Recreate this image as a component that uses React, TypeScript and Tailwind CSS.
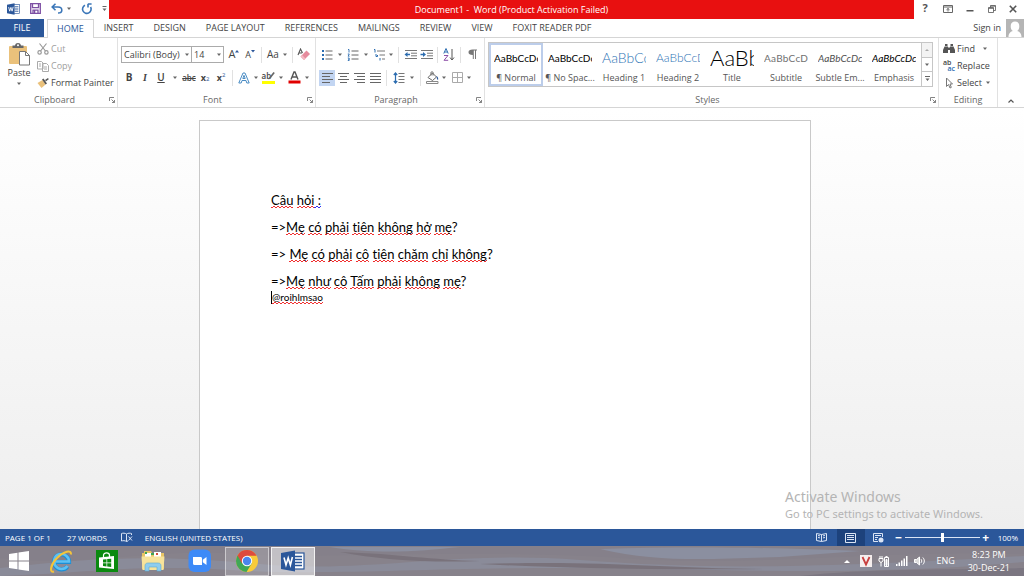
import { useState } from "react";
import type { ReactNode } from "react";

const TABS = ["HOME", "INSERT", "DESIGN", "PAGE LAYOUT", "REFERENCES", "MAILINGS", "REVIEW", "VIEW", "FOXIT READER PDF"];

const STYLES = [
  { name: "¶ Normal", sample: "AaBbCcDc", look: "text-[10px] text-black" },
  { name: "¶ No Spac...", sample: "AaBbCcDc", look: "text-[10px] text-black" },
  { name: "Heading 1", sample: "AaBbCc", look: "text-[14px] text-[#2e74b5] font-light" },
  { name: "Heading 2", sample: "AaBbCcD", look: "text-[12px] text-[#2e74b5] font-light" },
  { name: "Title", sample: "AaBb", look: "text-[22px] text-black font-light" },
  { name: "Subtitle", sample: "AaBbCcD", look: "text-[10px] text-[#707070] tracking-wide" },
  { name: "Subtle Em...", sample: "AaBbCcDc", look: "text-[10px] text-[#505050] italic" },
  { name: "Emphasis", sample: "AaBbCcDc", look: "text-[10px] text-black italic" },
];

function Caret() {
  return (
    <svg viewBox="0 0 8 4" className="w-2 h-1 shrink-0" fill="#666">
      <path d="M2 0.5h4L4 3z" />
    </svg>
  );
}

function Sep() {
  return <span className="w-px h-4 bg-[#e1e1e1] shrink-0 mx-[3px]" />;
}

function Tool({ label, className = "w-4", children }: { label: string; className?: string; children: ReactNode }) {
  return (
    <button aria-label={label} className={`${className} h-4 shrink-0 flex items-center justify-center`}>
      {children}
    </button>
  );
}

function Launcher() {
  return (
    <svg viewBox="0 0 6 6" className="w-[6px] h-[6px]" fill="none" stroke="#777" strokeWidth="0.9">
      <path d="M0.5 4V0.5H5M2.5 2.5L5.5 5.5M5.5 3v2.5H3" />
    </svg>
  );
}

function Group({ name, className, launcher = true, children }: { name: string; className: string; launcher?: boolean; children: ReactNode }) {
  return (
    <section className={`${className} flex flex-col border-r border-[#e1e1e1]`}>
      <div className="h-[55px]">{children}</div>
      <div className="h-[14px] flex items-center">
        <span className="flex-1 text-center text-[#666]">{name}</span>
        {launcher && <span className="w-2"><Launcher /></span>}
      </div>
    </section>
  );
}

function WordMark({ className }: { className: string }) {
  return (
    <svg viewBox="0 0 24 22" className={className}>
      <rect x="12" y="3" width="11" height="16" fill="#fff" stroke="#2b579a" strokeWidth="1.2" />
      <path d="M14 6.5h7M14 9.5h7M14 12.5h7M14 15.5h7" stroke="#2b579a" strokeWidth="1.3" />
      <path d="M0 3L14 0.5v21L0 19z" fill="#2b579a" />
      <path d="M3 7.5l2 7.5 2.2-7 2.2 7 2-8" fill="none" stroke="#fff" strokeWidth="1.6" />
    </svg>
  );
}

function TitleBar() {
  return (
    <header className="h-[19px] flex items-stretch bg-white">
      <div className="w-[109px] flex items-center pl-[7px] pb-[2px]">
        <WordMark className="w-[13px] h-3" />
        <button aria-label="Save" className="ml-[10px]">
          <svg viewBox="0 0 11 11" className="w-[11px] h-[11px]" fill="none" stroke="#7d4fa3" strokeWidth="1.3">
            <path d="M0.7 0.7h9.6v9.6H0.7zM2.5 0.7v4h6v-4M3 10.3V7.2h5v3.1M4.6 7.5v2.5" />
          </svg>
        </button>
        <button aria-label="Undo" className="ml-[10px]">
          <svg viewBox="0 0 12 11" className="w-3 h-[11px]" fill="none" stroke="#3a76b8" strokeWidth="1.6">
            <path d="M4.5 0.8L1.2 4l3.3 3.2M1.5 4H7c2.5 0 3.8 1.3 3.8 3.2S9 10 7 10" />
          </svg>
        </button>
        <span className="ml-[2px] flex"><Caret /></span>
        <button aria-label="Repeat" className="ml-2">
          <svg viewBox="0 0 12 12" className="w-3 h-3" fill="none" stroke="#3a76b8" strokeWidth="1.6">
            <path d="M4 2.2A4.3 4.3 0 1 0 9.6 4M6.8 1h3.8M7 1v3.6" />
          </svg>
        </button>
        <button aria-label="Customize quick access" className="ml-[9px]">
          <svg viewBox="0 0 5 6" className="w-[5px] h-[6px]" fill="#666">
            <path d="M0.5 0h4v1h-4zM0.5 2.5h4L2.5 5z" />
          </svg>
        </button>
      </div>
      <h1 className="flex-1 bg-[#e81010] text-white text-[9px] flex items-center justify-center whitespace-pre">
        Document1 -  Word (Product Activation Failed)
      </h1>
      <div className="w-[110px] flex items-center justify-between px-[7px] pb-[2px] text-[#555]">
        <button aria-label="Help" className="text-[11px] font-bold w-2">?</button>
        <button aria-label="Ribbon display options">
          <svg viewBox="0 0 10 8" className="w-[10px] h-2" fill="none" stroke="#666">
            <path d="M0.5 0.5h9v7h-9zM0.5 2h9M5 6.5v-3M3.5 4.8L5 3.5l1.5 1.3" />
          </svg>
        </button>
        <button aria-label="Minimize"><svg viewBox="0 0 8 8" className="w-2 h-2"><path d="M0.5 5h7v1.5h-7z" fill="#555" /></svg></button>
        <button aria-label="Restore">
          <svg viewBox="0 0 8 8" className="w-2 h-2" fill="none" stroke="#555">
            <path d="M0.5 2.5h5v5h-5zM0.5 3.4h5M2.5 2.5v-2h5v5h-2M2.5 1.2h5" strokeWidth="0.8" />
          </svg>
        </button>
        <button aria-label="Close">
          <svg viewBox="0 0 8 8" className="w-2 h-2" stroke="#555" strokeWidth="1.6"><path d="M0.8 0.8l6.4 6.4M7.2 0.8L0.8 7.2" /></svg>
        </button>
      </div>
    </header>
  );
}

function TabRow({ active, onSelect }: { active: string; onSelect: (tab: string) => void }) {
  return (
    <nav className="h-[19px] flex items-stretch bg-white text-[9px] text-[#444] border-b border-[#d5d5d5]">
      <button className="w-11 mr-[3px] bg-[#2b579a] text-white">FILE</button>
      {TABS.map((tab) => (
        <button
          key={tab}
          onClick={() => onSelect(tab)}
          className={`px-[9px] whitespace-nowrap ${tab === active ? "border border-b-0 border-[#d5d5d5] bg-white text-[#2b579a] -mb-px" : "border border-transparent"}`}
        >
          {tab}
        </button>
      ))}
      <div className="ml-auto flex items-center">
        <a href="#signin" className="mr-[5px] whitespace-nowrap">Sign in</a>
        <svg viewBox="0 0 18 18" className="w-[18px] h-[18px]">
          <rect width="18" height="18" fill="#b5b5b5" />
          <path d="M2.5 18c0-4 2.5-5.5 4.3-6C5 11 4.7 8.8 4.7 7c0-3 1.8-4.6 4.3-4.6s4.3 1.6 4.3 4.6c0 1.8-.3 4-2.1 5 1.8.5 4.3 2 4.3 6z" fill="#fff" />
        </svg>
      </div>
    </nav>
  );
}

function ClipboardGroup() {
  return (
    <Group name="Clipboard" className="w-[118px] shrink-0">
      <div className="flex pl-[5px] pt-[2px]">
        <button className="w-[28px] pt-[2px] flex flex-col items-center text-[#444]">
          <svg viewBox="0 0 24 24" className="w-6 h-6">
            <rect x="2" y="4" width="18" height="18" rx="1" fill="#eac17b" />
            <path d="M5.5 6V3.5H8C8.2 1.8 9.5 1 11 1s2.8.8 3 2.500h2.500V6z" fill="#666" />
            <circle cx="11" cy="3.2" r="1" fill="#fff" />
            <path d="M12.5 9.5h6l4 4V23h-10z" fill="#fff" stroke="#777" />
            <path d="M18.5 9.5v4h4" fill="none" stroke="#777" />
          </svg>
          <span className="leading-[14px]">Paste</span>
          <span className="h-2 flex items-center"><Caret /></span>
        </button>
        <div className="flex flex-col pl-1">
          <button className="h-[17px] flex items-center gap-[2px] text-[#a0a0a0]">
            <svg viewBox="0 0 12 12" className="w-3 h-3" fill="none" stroke="#999" strokeWidth="1.2">
              <path d="M2.5 0.5L8.500 8M9.5 0.5L3.500 8" />
              <circle cx="2.6" cy="9.4" r="1.7" />
              <circle cx="9.4" cy="9.4" r="1.7" />
            </svg>
            Cut
          </button>
          <button className="h-[17px] flex items-center gap-[2px] text-[#a0a0a0]">
            <svg viewBox="0 0 12 12" className="w-3 h-3" fill="#fff" stroke="#aaa">
              <path d="M0.5 1.5h4l1.5 1.5v6h-5.5zM5.5 3.5h4l2 2v6h-6zM7 7h3M7 9h3M2 4h2M2 6h2" />
            </svg>
            Copy
          </button>
          <button className="h-[17px] flex items-center gap-[2px] text-[#444] whitespace-nowrap">
            <svg viewBox="0 0 12 12" className="w-3 h-3">
              <path d="M0.5 6l5-3 3 4.5-4 3.5z" fill="#eac17b" />
              <path d="M5 2.5l1.5-1 3.5 5-1.5 1zM8 3l3-2 0.800 1.200L9 4.200z" fill="#555" />
            </svg>
            Format Painter
          </button>
        </div>
      </div>
    </Group>
  );
}

function FontGroup() {
  return (
    <Group name="Font" className="w-[198px] shrink-0">
      <div className="pl-[3px] pt-2 flex flex-col gap-[6px] text-[#444]">
        <div className="flex items-center h-[17px]">
          <label className="w-[71px] h-[17px] border border-[#ababab] flex items-center">
            <select aria-label="Font name" className="appearance-none flex-1 min-w-0 pl-[2px] outline-none">
              <option>Calibri (Body)</option>
              <option>Calibri Light</option>
            </select>
            <Caret />
          </label>
          <label className="w-8 h-[17px] border border-l-0 border-[#ababab] flex items-center">
            <select aria-label="Font size" defaultValue="14" className="appearance-none flex-1 min-w-0 pl-[2px] outline-none">
              <option>11</option>
              <option>14</option>
            </select>
            <Caret />
          </label>
          <Tool label="Grow font" className="w-4 ml-[2px]">
            <span className="text-[11px]">A</span>
            <svg viewBox="0 0 4 10" className="w-1 h-[10px]" fill="#2b579a"><path d="M0 2.500l2-2.500L4 2.500z" /></svg>
          </Tool>
          <Tool label="Shrink font">
            <span className="text-[9px]">A</span>
            <svg viewBox="0 0 4 10" className="w-1 h-[10px]" fill="#2b579a"><path d="M0 0h4L2 2.500z" /></svg>
          </Tool>
          <Sep />
          <Tool label="Change case"><span className="text-[10px]">Aa</span></Tool>
          <Caret />
          <Sep />
          <Tool label="Clear formatting" className="w-4">
            <svg viewBox="0 0 14 13" className="w-[14px] h-[13px]">
              <path d="M1 7L3.500 1 5.500 5M2 5h3" fill="none" stroke="#555" strokeWidth="1.100" />
              <path d="M3.500 8.500L9.500 2.500l3.500 3.500L7 12z" fill="#e68a9c" />
              <path d="M3.500 8.500l1.500-1.500 3.500 3.500L7 12z" fill="#f4b8c2" />
            </svg>
          </Tool>
        </div>
        <div className="flex items-center h-[17px]">
          <Tool label="Bold"><b className="text-[10px]">B</b></Tool>
          <Tool label="Italic"><i className="text-[10px] font-bold font-['Liberation_Serif',serif]">I</i></Tool>
          <Tool label="Underline"><u className="text-[10px] font-semibold">U</u></Tool>
          <span className="w-3 flex justify-center"><Caret /></span>
          <Tool label="Strikethrough"><s className="text-[8px] font-semibold">abc</s></Tool>
          <Tool label="Subscript"><b className="text-[9px]">x</b><sub className="text-[6px] text-[#2b579a]">2</sub></Tool>
          <Tool label="Superscript"><b className="text-[9px]">x</b><sup className="text-[6px] text-[#2b579a]">2</sup></Tool>
          <Sep />
          <Tool label="Text effects">
            <svg viewBox="0 0 12 12" className="w-3 h-3" fill="#fff" stroke="#4a8cc4" strokeLinejoin="round">
              <path d="M0.8 11L5 1h2l4.200 10H8.800L8 8.500H4L3.200 11zM4.800 6.500h2.400L6 3.300z" />
            </svg>
          </Tool>
          <Caret />
          <Tool label="Highlight color">
            <span className="relative w-[13px] h-[13px] border-b-[3px] border-[#ffff00] flex items-center text-[8px] font-semibold leading-none pb-px">
              ab
              <svg viewBox="0 0 13 10" className="absolute inset-0 w-[13px] h-[10px]">
                <path d="M6.500 8.500l0.600-2L11.500 1l1.300 1L8.500 7.500z" fill="#666" />
              </svg>
            </span>
          </Tool>
          <span className="w-[10px] flex justify-center"><Caret /></span>
          <Tool label="Font color">
            <svg viewBox="0 0 13 13" className="w-[13px] h-[13px]">
              <path d="M3 8.500L6 1h1l3 7.500M4.300 6h4.400" fill="none" stroke="#555" strokeWidth="1.400" />
              <path d="M0.500 9.500h12v3h-12z" fill="#e00000" />
            </svg>
          </Tool>
          <span className="w-[10px] flex justify-center"><Caret /></span>
        </div>
      </div>
    </Group>
  );
}

function Lines({ d }: { d: string }) {
  return (
    <svg viewBox="0 0 11 10" className="w-[11px] h-[10px]" stroke="#666" fill="none">
      <path d={d} />
    </svg>
  );
}

function ParagraphGroup() {
  return (
    <Group name="Paragraph" className="w-[169px] shrink-0">
      <div className="pl-[3px] pt-2 flex flex-col gap-[6px]">
        <div className="flex items-center h-[17px]">
          <Tool label="Bullets">
            <svg viewBox="0 0 12 12" className="w-3 h-3">
              <path d="M1 1h2v2H1zM1 5h2v2H1zM1 9h2v2H1z" fill="#2b6cb0" />
              <path d="M4.500 2h7M4.500 6h7M4.500 10h7" stroke="#666" />
            </svg>
          </Tool>
          <span className="w-[10px] flex justify-center"><Caret /></span>
          <Tool label="Numbering">
            <svg viewBox="0 0 12 12" className="w-3 h-3">
              <path d="M1 0.500h1v3M0.800 5h1.500l-1.200 2.200h1.400M0.800 9h1.400v2.500H0.800M1 10.200h1" stroke="#2b6cb0" fill="none" strokeWidth="0.900" />
              <path d="M4.500 2h7M4.500 6h7M4.500 10h7" stroke="#666" />
            </svg>
          </Tool>
          <span className="w-[10px] flex justify-center"><Caret /></span>
          <Tool label="Multilevel list">
            <svg viewBox="0 0 13 12" className="w-[13px] h-3">
              <path d="M1 0.500h1v3M3 5v2.500h1.500V6M7 9v2.500" stroke="#2b6cb0" fill="none" />
              <path d="M4 2h8M6.500 6H12M9 10h3" stroke="#777" />
            </svg>
          </Tool>
          <Caret />
          <Sep />
          <Tool label="Decrease indent">
            <svg viewBox="0 0 13 11" className="w-[13px] h-[11px]">
              <path d="M1 1.500h12M7 4.200h6M7 6.800h6M1 9.500h12" stroke="#777" />
              <path d="M0.500 5.500l3-2.500v1.700H6v1.600H3.500V8z" fill="#2b6cb0" />
            </svg>
          </Tool>
          <Tool label="Increase indent">
            <svg viewBox="0 0 13 11" className="w-[13px] h-[11px]">
              <path d="M1 1.500h12M7 4.200h6M7 6.800h6M1 9.500h12" stroke="#777" />
              <path d="M6 5.500L3 3v1.700H0.500v1.600H3V8z" fill="#2b6cb0" />
            </svg>
          </Tool>
          <Sep />
          <Tool label="Sort">
            <svg viewBox="0 0 12 13" className="w-3 h-[13px]" fill="none">
              <path d="M0.800 5.500L3 0.500l2.200 5M1.600 4h2.800" stroke="#2b6cb0" />
              <path d="M1 7.500h4L1 12.300h4.200" stroke="#8e4fa8" />
              <path d="M9 1v10.500M7 9.500L9 12l2-2.500" stroke="#555" />
            </svg>
          </Tool>
          <Sep />
          <Tool label="Show formatting marks">
            <svg viewBox="0 0 9 11" className="w-[9px] h-[11px]">
              <path d="M4.500 0.500H9v1H8V10H7V1.500H5.800V10h-1V6C2 6 0.500 5 0.500 3.200S2 0.500 4.500 0.500z" fill="#777" />
            </svg>
          </Tool>
        </div>
        <div className="flex items-center h-[17px]">
          <Tool label="Align left" className="w-4 bg-[#c2d5f2]"><Lines d="M0 0.500h11M0 3.500h8M0 6.500h11M0 9.500h8" /></Tool>
          <Tool label="Center"><Lines d="M0 0.500h11M2 3.500h7M0 6.500h11M2 9.500h7" /></Tool>
          <Tool label="Align right"><Lines d="M0 0.500h11M3 3.500h8M0 6.500h11M3 9.500h8" /></Tool>
          <Tool label="Justify"><Lines d="M0 0.500h11M0 3.500h11M0 6.500h11M0 9.500h11" /></Tool>
          <Sep />
          <Tool label="Line spacing" className="w-4 ml-px">
            <svg viewBox="0 0 12 12" className="w-3 h-3" fill="none">
              <path d="M5.500 1.500h6M5.500 4.500h6M5.500 7.500h6M5.500 10.500h6" stroke="#777" />
              <path d="M2.500 1v10M0.800 3l1.700-2 1.700 2M0.800 9l1.700 2 1.700-2" stroke="#2b6cb0" strokeWidth="1.200" />
            </svg>
          </Tool>
          <span className="w-[10px] flex justify-center"><Caret /></span>
          <Sep />
          <Tool label="Shading">
            <svg viewBox="0 0 13 13" className="w-[13px] h-[13px]" fill="none">
              <path d="M2 6.500L6.500 2l4 4L6.500 9.500z" stroke="#666" fill="#fff" />
              <path d="M5 4.500V1.500c0-1 2-1 2 0v3" stroke="#666" />
              <path d="M10.500 5c1.500 1 2 2.500 1.500 4-1-.5-1.500-2-1.500-4z" fill="#2b579a" />
              <path d="M0.500 10.500h11.500v2H0.500z" stroke="#888" fill="#fff" />
            </svg>
          </Tool>
          <Caret />
          <Tool label="Borders" className="w-4 ml-px">
            <svg viewBox="0 0 11 11" className="w-[11px] h-[11px]" fill="none" stroke="#aaa">
              <path d="M0.500 0.500h10v10h-10zM5.500 0.500v10M0.500 5.500h10" />
            </svg>
          </Tool>
          <Caret />
        </div>
      </div>
    </Group>
  );
}

function StylesGroup() {
  const [picked, setPicked] = useState("¶ Normal");
  return (
    <Group name="Styles" className="flex-1 min-w-0">
      <div className="pl-[3px] pr-[5px] pt-1">
        <div className="h-[45px] flex border border-[#c6c6c6]">
          {STYLES.map((s) => (
            <button
              key={s.name}
              onClick={() => setPicked(s.name)}
              className={`flex-1 min-w-0 px-[3px] flex flex-col items-center border-2 ${s.name === picked ? "border-[#bccdea]" : "border-transparent"}`}
            >
              <span className={`w-full h-[26px] overflow-hidden whitespace-nowrap text-left leading-[26px] font-[Lato,sans-serif] ${s.look}`}>{s.sample}</span>
              <span className="whitespace-nowrap leading-[13px] text-[#555]">{s.name}</span>
            </button>
          ))}
          <div className="w-[11px] flex flex-col border-l border-[#c6c6c6] divide-y divide-[#c6c6c6]">
            <button aria-label="Previous styles" className="flex-1 flex items-center justify-center bg-[#f3f3f3]">
              <svg viewBox="0 0 4 2" className="w-1 h-[2px]" fill="#aaa"><path d="M0 2h4L2 0z" /></svg>
            </button>
            <button aria-label="Next styles" className="flex-1 flex items-center justify-center"><Caret /></button>
            <button aria-label="More styles" className="flex-1 flex items-center justify-center">
              <svg viewBox="0 0 5 6" className="w-[5px] h-[6px]" fill="#666"><path d="M0 0h5v1H0zM0.500 2.500h4L2.500 5z" /></svg>
            </button>
          </div>
        </div>
      </div>
    </Group>
  );
}

function EditingGroup() {
  return (
    <Group name="Editing" className="w-[59px] shrink-0" launcher={false}>
      <div className="flex flex-col pl-1 pt-[2px] text-[#444]">
        <button className="h-[17px] flex items-center gap-[2px]">
          <svg viewBox="0 0 12 11" className="w-3 h-[11px]" fill="#555">
            <path d="M2 1h2.500v2H2zM7.500 1H10v2H7.500zM1.500 3.500H5V10H0V7zM7 3.500h3.500L12 7v3H7zM5 4.500h2v2.500H5z" />
          </svg>
          Find
          <span className="ml-1 flex"><Caret /></span>
        </button>
        <button className="h-[17px] flex items-center gap-[2px]">
          <span className="w-3 flex flex-col text-[7px] leading-[6px] font-semibold">
            <span className="text-left">ab</span>
            <span className="text-right text-[#2b6cb0]">ac</span>
          </span>
          Replace
        </button>
        <button className="h-[17px] flex items-center gap-[2px]">
          <svg viewBox="0 0 12 12" className="w-3 h-3" fill="#fff" stroke="#777">
            <path d="M3.500 1v8.500l2-2 1.500 3.500 1.300-.6L7 7h2.500z" />
          </svg>
          Select
          <Caret />
        </button>
      </div>
    </Group>
  );
}

// two-row red zigzag under a misspelled word
function Typo({ children }: { children: ReactNode }) {
  return (
    <span className="bg-[repeating-linear-gradient(90deg,#f03030_0_2px,transparent_2px_4px),repeating-linear-gradient(90deg,transparent_0_2px,#f03030_2px_4px)] bg-[length:100%_1px,100%_1px] bg-[position:0_100%,0_calc(100%-1px)] bg-no-repeat">
      {children}
    </span>
  );
}

function Line({ text }: { text: string }) {
  return (
    <p className="leading-[17px] mb-[10px]">
      {text.split(/(\s+|=>|\?)/).map((part, i) =>
        /^(\s*|=>|\?)$/.test(part) ? part : <Typo key={i}>{part}</Typo>
      )}
    </p>
  );
}

function DocumentArea() {
  return (
    <main className="relative flex-1 min-h-0 overflow-hidden bg-gradient-to-b from-white to-[#eeeeee] pt-3 pr-[14px] flex justify-center">
      <article className="w-[612px] bg-white border border-b-0 border-[#c9c9c9] pl-[71px] pt-[71px] text-[13px] text-black font-[Lato,'Noto_Sans',sans-serif] [font-variant-ligatures:none]">
        <p className="leading-[17px] mb-[10px]">
          <Typo>Câu</Typo> <Typo>hỏi</Typo>
          <span className="bg-[repeating-linear-gradient(90deg,#3030f0_0_2px,transparent_2px_4px),repeating-linear-gradient(90deg,transparent_0_2px,#3030f0_2px_4px)] bg-[length:100%_1px,100%_1px] bg-[position:0_100%,0_calc(100%-1px)] bg-no-repeat"> :</span>
        </p>
        <Line text="=>Mẹ có phải tiên không hở mẹ?" />
        <Line text="=> Mẹ có phải cô tiên chăm chỉ không?" />
        <div className="-mb-[10px]">
          <Line text="=>Mẹ như cô Tấm phải không mẹ?" />
        </div>
        <p className="text-[10px] leading-[14px] flex items-center">
          <span className="w-px h-[13px] bg-black" />
          <Typo>@roihlmsao</Typo>
        </p>
      </article>
      <div className="absolute right-[41px] bottom-[8px] text-[#b4b4b4] font-['Noto_Sans',sans-serif]">
        <p className="text-[14px] leading-[18px]">Activate Windows</p>
        <p className="text-[11px] leading-[15px]">Go to PC settings to activate Windows.</p>
      </div>
    </main>
  );
}

function StatusBar() {
  return (
    <footer className="h-[17px] bg-[#2b579a] text-white text-[9px] flex items-center pl-[5px] pr-[6px] whitespace-nowrap">
      <div className="flex items-center text-[8px]">
        <span>PAGE 1 OF 1</span>
        <span className="ml-4">27 WORDS</span>
        <svg viewBox="0 0 12 11" className="w-3 h-[11px] ml-[14px]" fill="none" stroke="#dbe5f5">
          <path d="M5.500 2C4 1 2 1 0.500 1.500V9c1.500-.5 3.500-.5 5 .5V2C7 1 9 1 10.500 1.500V3M5.500 9.500L7 9M7.500 4.500l3.500 4M11 4.500l-3.500 4" />
        </svg>
        <span className="ml-3">ENGLISH (UNITED STATES)</span>
      </div>
      <div className="ml-auto flex items-center h-full">
        <button aria-label="Read mode" className="w-6 flex justify-center">
          <svg viewBox="0 0 11 9" className="w-[11px] h-[9px]" fill="none" stroke="#dbe5f5">
            <path d="M5.500 1.500L0.500 0.500v7l5 1 5-1v-7zM5.500 1.500v7M2 2.500l2 .4M2 4.500l2 .4M9 2.500l-2 .4M9 4.500l-2 .4" />
          </svg>
        </button>
        <button aria-label="Print layout" className="w-7 h-full ml-[3px] bg-[#1d427c] flex items-center justify-center">
          <svg viewBox="0 0 11 10" className="w-[11px] h-[10px]" fill="none" stroke="#dbe5f5">
            <path d="M0.500 0.500h10v9h-10zM2 2.500h7M2 4.500h7M2 6.500h7" />
          </svg>
        </button>
        <button aria-label="Web layout" className="w-7 flex justify-center">
          <svg viewBox="0 0 11 10" className="w-[11px] h-[10px]" fill="none" stroke="#dbe5f5">
            <path d="M5 8.500H0.500v-8h9V4M2 2.500h6M2 4.500h3M2 6.500h2" />
            <circle cx="8" cy="7" r="2.500" fill="#dbe5f5" stroke="none" />
          </svg>
        </button>
        <button aria-label="Zoom out" className="w-3 text-[12px] font-bold leading-none">−</button>
        <input aria-label="Zoom" type="range" defaultValue="50" className="appearance-none w-[75px] h-3 bg-[linear-gradient(#dbe5f5,#dbe5f5)] bg-[length:100%_1px] bg-center bg-no-repeat [&::-webkit-slider-thumb]:appearance-none [&::-webkit-slider-thumb]:w-[3px] [&::-webkit-slider-thumb]:h-[9px] [&::-webkit-slider-thumb]:bg-white" />
        <button aria-label="Zoom in" className="w-3 text-[12px] font-bold leading-none">+</button>
        <span className="ml-[6px] text-[8px]">100%</span>
      </div>
    </footer>
  );
}

function Taskbar() {
  return (
    <div className="relative h-[30px] bg-[#87828b] flex items-stretch text-white text-[9px]">
      <svg viewBox="0 0 1024 30" preserveAspectRatio="none" className="absolute inset-0 w-full h-full">
        <path d="M0 0h1024v8C850 4 760 22 620 12S330 14 240 8 80 22 0 12z" fill="#85808a" />
        <path d="M0 22c90-10 150-14 260-4s190-14 320-4 240 8 444-4v6c-180 16-310 6-460 6S330 30 230 24 80 28 0 30z" fill="#8a8b99" />
        <path d="M330 1c50 8 90 4 130 0zM600 3c60 14 110 10 180 8L860 5C780 2 700 0 600 3z" fill="#8b8fa0" />
        <path d="M480 18c120-4 180 4 290 5-110 1-190 0-290-5zM340 6c60 2 90 8 140 9-50 2-100-1-140-9z" fill="#79727b" />
        <path d="M800 30c70-8 140-6 224-8v8z" fill="#7b7681" />
      </svg>
      <div className="relative flex items-center">
        <button aria-label="Start" className="w-[38px] flex justify-center">
          <svg viewBox="0 0 20 20" className="w-5 h-5" fill="#fff">
            <path d="M0 3l8.500-1.200v7.700H0zM9.500 1.600L20 0v9.500H9.500zM0 10.500h8.500v7.700L0 17zM9.500 10.500H20V20L9.500 18.400z" />
          </svg>
        </button>
        <button aria-label="Internet Explorer" className="w-[46px] flex justify-center">
          <svg viewBox="0 0 24 24" className="w-6 h-6" fill="none">
            <path d="M6 13H20A7.500 7.500 0 1 0 18.500 17.500" stroke="#1d8fd6" strokeWidth="4.200" />
            <path d="M6 12.500H20A7.500 7.500 0 1 0 18.500 17" stroke="#5fc0f2" strokeWidth="2.600" />
            <path d="M5 22.500C0 24 1.500 15.500 8 9S23 0 21.800 5.500" stroke="#f5c43a" strokeWidth="2" />
          </svg>
        </button>
        <button aria-label="Store" className="w-[46px] flex justify-center">
          <svg viewBox="0 0 22 22" className="w-[22px] h-[22px]">
            <rect width="22" height="22" fill="#0a8a0f" />
            <path d="M3 7.500l15-1.500V19L3 17.500z" fill="#fff" />
            <path d="M7.500 8V5.500c0-3.500 6-3.500 6 0V8" fill="none" stroke="#fff" strokeWidth="1.200" />
            <path d="M7 9.500l3.500-.3v3.300H7zM11.200 9.100l4-.4v3.800h-4zM7 13.200h3.500v3.200L7 16zM11.200 13.200h4V17l-4-.5z" fill="#0a8a0f" />
          </svg>
        </button>
        <button aria-label="File Explorer" className="w-[46px] flex justify-center">
          <svg viewBox="0 0 24 22" className="w-6 h-[22px]">
            <path d="M1 3h2V1h7l1 2h12v16H1z" fill="#e8c565" />
            <path d="M4 3h6v4H4zM13 2h7v5h-7z" fill="#fff" />
            <path d="M4 2h2v2H4zM10 3h3v2h-3z" fill="#3fa553" />
            <path d="M15 3h2v2h-2z" fill="#d24f3a" />
            <path d="M0.500 6.500h23L22.500 20h-21z" fill="#f7e39b" />
            <path d="M4 21v-5c0-2 1-3 3-3h10c2 0 3 1 3 3v5h-4v-4H8v4z" fill="#8fcdee" stroke="#5aa7d3" strokeWidth="0.600" />
          </svg>
        </button>
        <button aria-label="Zoom Meetings" className="w-[48px] flex justify-center">
          <svg viewBox="0 0 24 24" className="w-6 h-6">
            <rect x="0.500" y="0.500" width="22.500" height="22.500" rx="6" fill="#3d8af7" />
            <path d="M5 8h7.500c1 0 1.500.6 1.500 1.500V16H6.500C5.500 16 5 15.400 5 14.500zM14.800 10.700L18.500 8v8l-3.700-2.700z" fill="#fff" />
          </svg>
        </button>
        <button aria-label="Chrome" className="w-11 h-[29px] ml-px border border-white/50 bg-white/15 flex items-center justify-center">
          <svg viewBox="0 0 24 24" className="w-6 h-6">
            <circle cx="12" cy="12" r="11" fill="#f8cb39" />
            <path d="M12 12L2.500 6.500A11 11 0 0 0 11.500 23L17 14z" fill="#3fa757" />
            <path d="M2.500 6.500A11 11 0 0 1 21.600 6.800H12L7 14.500z" fill="#dd4b3e" />
            <circle cx="12" cy="12" r="5.200" fill="#fff" />
            <circle cx="12" cy="12" r="4.200" fill="#4a86ee" />
          </svg>
        </button>
        <button aria-label="Word" className="w-11 h-[29px] ml-[2px] border border-white/80 bg-white/50 flex items-center justify-center">
          <WordMark className="w-6 h-[22px]" />
        </button>
      </div>
      <div className="relative ml-auto flex items-center pr-[14px]">
        <button aria-label="Show hidden icons">
          <svg viewBox="0 0 6 3" className="w-[6px] h-[3px]" fill="#fff"><path d="M0 3h6L3 0z" /></svg>
        </button>
        <svg viewBox="0 0 12 12" className="w-3 h-3 ml-[10px]">
          <rect width="12" height="12" fill="#f5eeee" />
          <path d="M2.500 2L6 9.500 9.500 2" fill="none" stroke="#c84040" strokeWidth="1.800" />
        </svg>
        <svg viewBox="0 0 12 12" className="w-3 h-3 ml-[6px]" fill="none" stroke="#fff">
          <path d="M6.500 2.500h4v9h-4zM7.500 1.500h2M2 1v2M4 1v2M1 3.500h4v2.500l-2 1.500-2-1.500zM3 7v4.500" />
          <path d="M8 4.500h1v6H8z" fill="#fff" />
        </svg>
        <svg viewBox="0 0 12 10" className="w-3 h-[10px] ml-[6px]" fill="#fff">
          <path d="M0 8h1.500v2H0zM2.500 6.500H4V10H2.500zM5 4.500h1.500V10H5zM7.500 2.500H9V10H7.500zM10 0h1.500v10H10z" />
        </svg>
        <svg viewBox="0 0 12 12" className="w-3 h-3 ml-[6px]" fill="none" stroke="#fff">
          <path d="M0.500 4.500h2L5.500 2v8L2.500 7.500h-2z" fill="#ddd" />
          <path d="M7 4.200c1 1 1 2.600 0 3.600M8.800 2.500c2 2 2 5 0 7" />
        </svg>
        <span className="ml-[10px]">ENG</span>
        <p className="ml-[13px] text-center leading-[13px]">
          8:23 PM
          <br />
          30-Dec-21
        </p>
      </div>
    </div>
  );
}

export default function App() {
  const [tab, setTab] = useState("HOME");

  return (
    <div className="h-screen flex flex-col overflow-hidden font-['Open_Sans','Noto_Sans',sans-serif] text-[9px]">
      <TitleBar />
      <TabRow active={tab} onSelect={setTab} />
      <div className="flex bg-white border-b border-[#d5d5d5] shrink-0">
        <ClipboardGroup />
        <FontGroup />
        <ParagraphGroup />
        <StylesGroup />
        <EditingGroup />
        <button aria-label="Collapse the ribbon" className="w-[26px] flex items-end justify-center pb-1">
          <svg viewBox="0 0 6 4" className="w-[6px] h-1" fill="none" stroke="#555" strokeWidth="1.200"><path d="M0.500 3.500L3 1l2.500 2.500" /></svg>
        </button>
      </div>
      <DocumentArea />
      <StatusBar />
      <Taskbar />
    </div>
  );
}
